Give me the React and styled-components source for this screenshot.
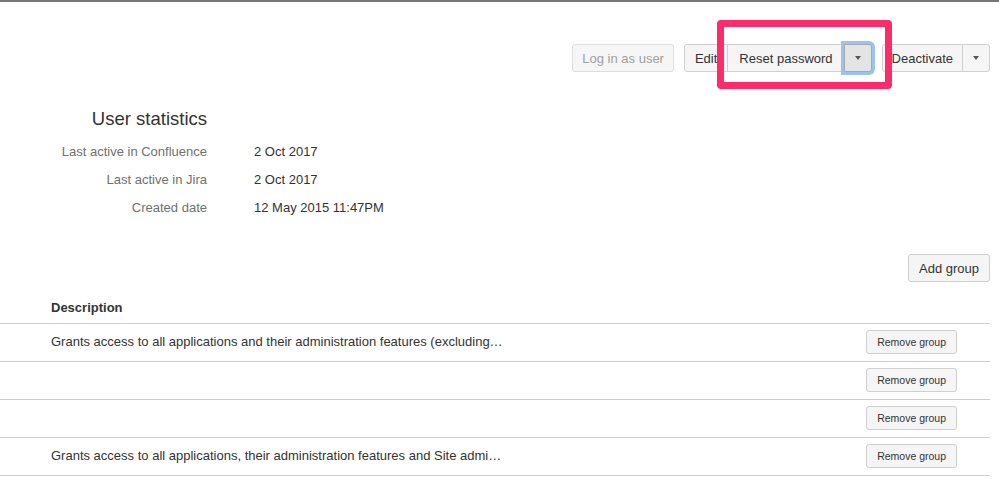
import React from 'react';
import styled, { createGlobalStyle, css } from 'styled-components';

const GlobalStyle = createGlobalStyle`
  html, body {
    margin: 0;
    padding: 0;
    background: #fff;
  }
  body {
    font-family: "Liberation Sans", Arial, Helvetica, sans-serif;
    color: #333;
  }
`;

const Page = styled.div`
  position: relative;
  width: 999px;
  min-height: 501px;
  border-top: 2px solid #777;
`;

// the pink annotation box drawn over the screenshot
const Highlight = styled.div`
  position: absolute;
  top: 18px;
  right: 107px;
  width: 161px;
  height: 55px;
  border: 7px solid #fc2c6c;
  border-radius: 4px;
  pointer-events: none;
`;

const Toolbar = styled.div`
  display: flex;
  justify-content: flex-end;
  align-items: center;
  gap: 10px;
  padding: 42px 9px 0 0;
`;

const ButtonGroup = styled.div`
  display: flex;
  & > button {
    border-radius: 0;
    margin-left: -1px;
  }
  & > button:first-child {
    border-radius: 3px 0 0 3px;
    margin-left: 0;
  }
  & > button:last-child {
    border-radius: 0 3px 3px 0;
  }
`;

const Button = styled.button`
  box-sizing: border-box;
  height: ${(p) => (p.$small ? '24px' : '28px')};
  padding: 0 ${(p) => p.$pad || 10}px;
  font-family: inherit;
  font-size: ${(p) => (p.$small ? '10.5px' : '13px')};
  color: #333;
  background: #f5f5f5;
  border: 1px solid #cfcfcf;
  border-radius: 3px;
  white-space: nowrap;
  cursor: pointer;
  ${(p) =>
    p.$disabled &&
    css`
      color: #a0a0a0;
      border-color: #dedede;
      background: #f6f6f6;
      cursor: default;
    `}
`;

const DropButton = styled(Button)`
  position: relative;
  width: 28px;
  padding: 0;
  display: flex;
  align-items: center;
  justify-content: center;
  ${(p) =>
    p.$focused &&
    css`
      background: #e4e4e4;
      border-color: #a8a8a8;
      box-shadow: 0 0 0 3px #98c4f5;
      z-index: 1;
    `}
`;

const Caret = styled.span`
  width: 0;
  height: 0;
  border-left: 3.5px solid transparent;
  border-right: 3.5px solid transparent;
  border-top: 4px solid #555;
`;

const Stats = styled.section`
  display: grid;
  grid-template-columns: 207px auto;
  column-gap: 47px;
  margin-top: 33px;
  font-size: 13px;
`;

const StatsTitle = styled.h2`
  grid-column: 1;
  margin: 0 0 5px;
  text-align: right;
  font-size: 18.5px;
  font-weight: normal;
  line-height: 28px;
  color: #333;
`;

const StatLabel = styled.div`
  grid-column: 1;
  text-align: right;
  line-height: 28px;
  color: #707070;
`;

const StatValue = styled.div`
  grid-column: 2;
  line-height: 28px;
  color: #333;
`;

const Actions = styled.div`
  display: flex;
  justify-content: flex-end;
  padding-right: 9px;
  margin-top: 32px;
`;

const Table = styled.div`
  width: 990px;
  margin-top: 10px;
  font-size: 13px;
`;

const HeaderRow = styled.div`
  padding: 7px 0 6px 51px;
  line-height: 18px;
  font-weight: bold;
  color: #333;
  border-bottom: 1px solid #cdcdcd;
`;

const Row = styled.div`
  box-sizing: border-box;
  height: 38px;
  display: flex;
  align-items: center;
  justify-content: space-between;
  padding: 0 33px 2px 51px;
  border-bottom: 1px solid #cdcdcd;
`;

const Description = styled.span`
  color: #333;
  white-space: nowrap;
`;

const groups = [
  'Grants access to all applications and their administration features (excluding…',
  '',
  '',
  'Grants access to all applications, their administration features and Site admi…',
];

export default function App() {
  return (
    <>
      <GlobalStyle />
      <Page>
        <Toolbar>
          <Button $disabled $pad={9}>Log in as user</Button>
          <ButtonGroup>
            <Button>Edit</Button>
            <Button $pad={11}>Reset password</Button>
            <DropButton $focused>
              <Caret />
            </DropButton>
          </ButtonGroup>
          <ButtonGroup>
            <Button $pad={9}>Deactivate</Button>
            <DropButton>
              <Caret />
            </DropButton>
          </ButtonGroup>
        </Toolbar>

        <Stats>
          <StatsTitle>User statistics</StatsTitle>
          <StatLabel>Last active in Confluence</StatLabel>
          <StatValue>2 Oct 2017</StatValue>
          <StatLabel>Last active in Jira</StatLabel>
          <StatValue>2 Oct 2017</StatValue>
          <StatLabel>Created date</StatLabel>
          <StatValue>12 May 2015 11:47PM</StatValue>
        </Stats>

        <Actions>
          <Button>Add group</Button>
        </Actions>

        <Table>
          <HeaderRow>Description</HeaderRow>
          {groups.map((text, i) => (
            <Row key={i}>
              <Description>{text}</Description>
              <Button $small>Remove group</Button>
            </Row>
          ))}
        </Table>

        <Highlight />
      </Page>
    </>
  );
}
